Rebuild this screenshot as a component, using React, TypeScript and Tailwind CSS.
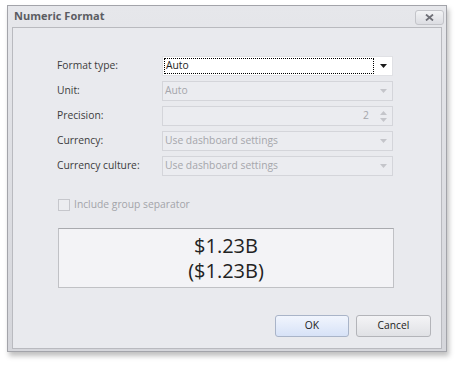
import React from "react";

const font = { fontFamily: '"Open Sans", "Liberation Sans", sans-serif' };

function Arrow({ disabled }: { disabled?: boolean }) {
  return (
    <svg width="7" height="4" viewBox="0 0 7 4" className="block">
      <path d="M0 0h7L3.5 4z" fill={disabled ? "#c4c5ca" : "#1a1a1a"} />
    </svg>
  );
}

function Combo({ value, disabled }: { value: string; disabled?: boolean }) {
  return (
    <div
      className={
        "flex h-[20px] w-[231px] items-center border " +
        (disabled ? "border-[#d4d5da] bg-[#ebecf0]" : "border-[#e0e1e5] bg-white")
      }
    >
      <div className="flex h-full flex-1 items-center px-[1px] py-[1px]">
        <div
          className={
            "flex h-full w-full items-center pl-[1px] " +
            (disabled ? "text-[#a5a6ab]" : "border border-dotted border-black text-[#1e1e1e]")
          }
        >
          {value}
        </div>
      </div>
      <div className="flex h-full w-[17px] items-center justify-center">
        <Arrow disabled={disabled} />
      </div>
    </div>
  );
}

function Spin() {
  return (
    <div className="flex h-[20px] w-[231px] items-center border border-[#d4d5da] bg-[#ebecf0]">
      <div className="flex-1 pr-[6px] text-right text-[#a5a6ab]">2</div>
      <div className="flex h-full w-[17px] flex-col items-center justify-center gap-[3px]">
        <svg width="7" height="4" viewBox="0 0 7 4" className="block">
          <path d="M0 4h7L3.5 0z" fill="#c4c5ca" />
        </svg>
        <svg width="7" height="4" viewBox="0 0 7 4" className="block">
          <path d="M0 0h7L3.5 4z" fill="#c4c5ca" />
        </svg>
      </div>
    </div>
  );
}

export default function App() {
  const rows: [string, React.ReactNode][] = [
    ["Format type:", <Combo value="Auto" />],
    ["Unit:", <Combo value="Auto" disabled />],
    ["Precision:", <Spin />],
    ["Currency:", <Combo value="Use dashboard settings" disabled />],
    ["Currency culture:", <Combo value="Use dashboard settings" disabled />],
  ];

  return (
    <div className="h-[369px] w-[461px] bg-white pl-[7px] pt-[5px] text-[10.3px]" style={font}>
      <div className="flex h-[347px] w-[440px] flex-col border border-[#a3a4aa] bg-gradient-to-b from-[#e6e7eb] to-[#d5d6db] px-[4px] pb-[2px] shadow-[2px_4px_5px_rgba(0,0,0,0.25)]">
        {/* Title bar */}
        <div className="flex h-[21px] items-center justify-between pl-[2px]">
          <span className="text-[11px] font-bold text-[#5b5c62]">Numeric Format</span>
          <div className="-mr-[2px] mt-[2px] flex h-[15px] w-[29px] items-center justify-center rounded-[3px] border border-[#c3c4c9] bg-gradient-to-b from-[#f2f3f5] to-[#dcdde2]">
            <svg width="9" height="7" viewBox="0 0 9 7">
              <path d="M1 0.5l7 6M8 0.5l-7 6" stroke="#6f7077" strokeWidth="1.8" />
            </svg>
          </div>
        </div>

        {/* Body */}
        <div className="flex flex-1 flex-col border border-[#b9babf] bg-[#e9eaee] pl-[44px] pr-[10px] pt-[28px]">
          <div className="flex flex-col gap-[5px]">
            {rows.map(([label, editor]) => (
              <div key={label} className="flex items-center">
                <div className="w-[105px] text-[#3c3c3c]">{label}</div>
                {editor}
              </div>
            ))}
          </div>

          <div className="mt-[21px] flex items-center gap-[4px] pl-[1px]">
            <div className="h-[12px] w-[12px] border border-[#c6c7cc] bg-[#ecedf0]" />
            <span className="text-[#a3a4a9]">Include group separator</span>
          </div>

          <div className="ml-[1px] mt-[16px] flex h-[60px] w-[336px] flex-col items-center justify-center border border-[#c0c1c5] border-t-[#a9aaae] bg-[#f3f3f6] text-[20px] leading-[25px] text-[#222]">
            <div>$1.23B</div>
            <div>($1.23B)</div>
          </div>

          <div className="mt-auto mb-[11px] flex justify-end gap-[7px]">
            <button className="h-[22px] w-[74px] rounded-[3px] border border-[#a9b4c8] bg-gradient-to-b from-[#f1f5fd] to-[#d7e2f7] text-[#222]">
              OK
            </button>
            <button className="h-[22px] w-[75px] rounded-[3px] border border-[#b3b4b9] bg-gradient-to-b from-[#f4f4f6] to-[#e0e1e5] text-[#222]">
              Cancel
            </button>
          </div>
        </div>
      </div>
    </div>
  );
}
